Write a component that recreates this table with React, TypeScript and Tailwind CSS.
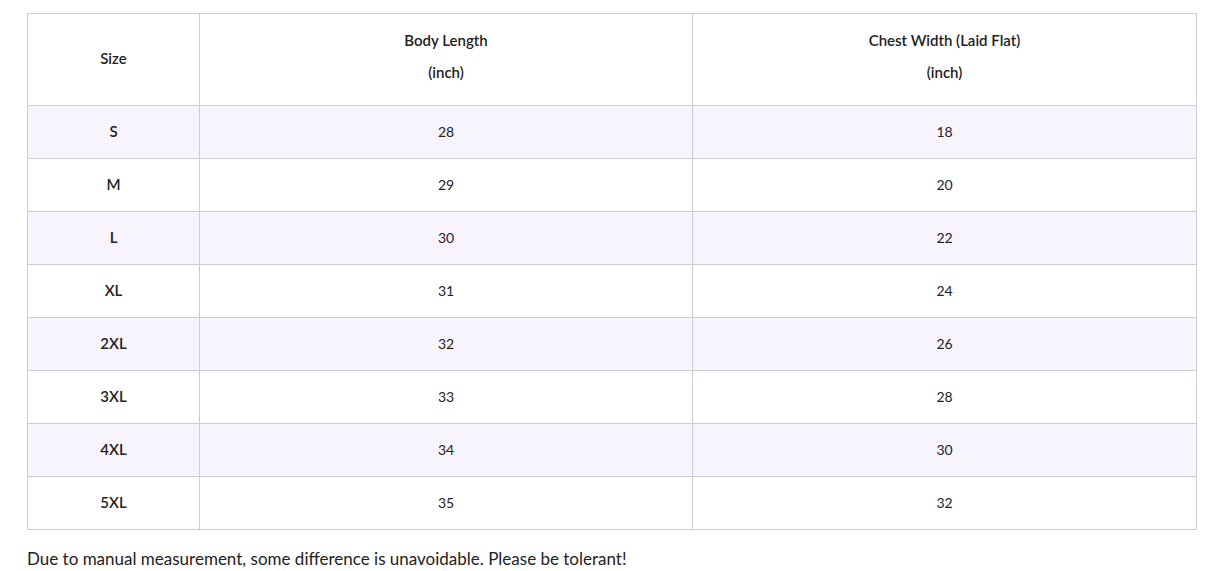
const ROWS: [string, number, number][] = [
  ["S", 28, 18],
  ["M", 29, 20],
  ["L", 30, 22],
  ["XL", 31, 24],
  ["2XL", 32, 26],
  ["3XL", 33, 28],
  ["4XL", 34, 30],
  ["5XL", 35, 32],
];

export default function App() {
  return (
    <div
      className="bg-white text-[#222] px-[27px] pt-[13px]"
      style={{ fontFamily: "Lato, 'Open Sans', sans-serif" }}
    >
      <table className="w-[1170px] border-collapse text-center text-[15px] table-fixed">
        <colgroup>
          <col className="w-[172px]" />
          <col className="w-[493px]" />
          <col />
        </colgroup>
        <thead>
          <tr className="h-[92px]">
            <th className="border border-[#cdcbd0] font-semibold pb-[2px]">Size</th>
            <th className="border border-[#cdcbd0] font-semibold pb-[8px]">
              <p className="leading-5 mb-3">Body Length</p>
              <p className="leading-5">(inch)</p>
            </th>
            <th className="border border-[#cdcbd0] font-semibold pb-[8px]">
              <p className="leading-5 mb-3">Chest Width (Laid Flat)</p>
              <p className="leading-5">(inch)</p>
            </th>
          </tr>
        </thead>
        <tbody>
          {ROWS.map(([size, body, chest], i) => (
            <tr
              key={size}
              className={`h-[53px] ${i % 2 === 0 ? "bg-[#f8f4fe]" : "bg-white"}`}
            >
              <td className="border border-[#cdcbd0] font-semibold pb-[2px]">{size}</td>
              <td className="border border-[#cdcbd0] text-[14px] pb-[2px]">{body}</td>
              <td className="border border-[#cdcbd0] text-[14px] pb-[2px]">{chest}</td>
            </tr>
          ))}
        </tbody>
      </table>
      <p className="mt-[17px] text-[17px] leading-6">
        Due to manual measurement, some difference is unavoidable. Please be tolerant!
      </p>
    </div>
  );
}
